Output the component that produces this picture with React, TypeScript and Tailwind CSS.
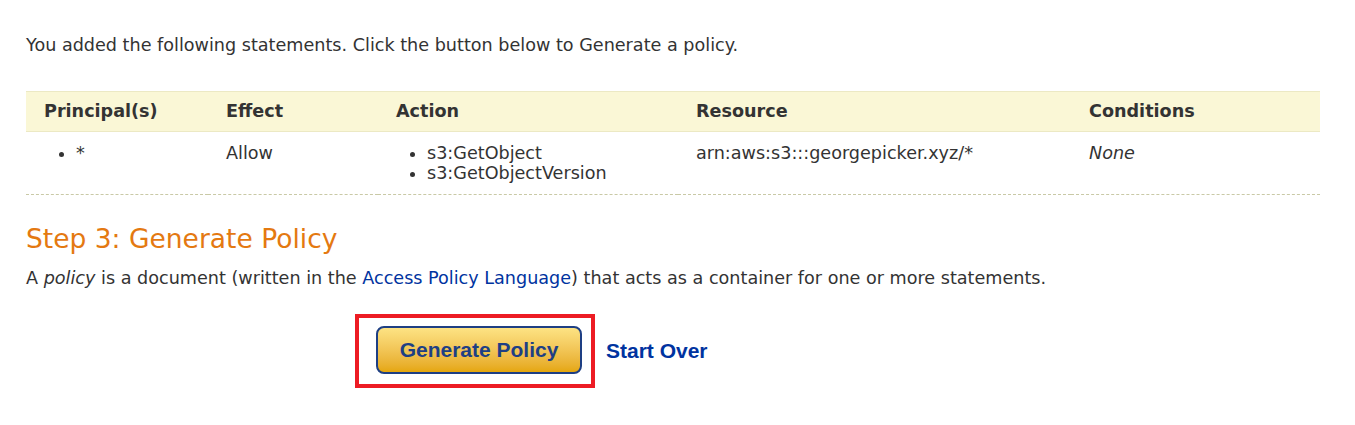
export default function App() {
  const font = { fontFamily: '"DejaVu Sans", Verdana, sans-serif' };
  const arial = { fontFamily: '"Liberation Sans", Arial, sans-serif' };
  const cell = 'pl-[18px] pt-[11px] pb-[11px]';
  return (
    <div className="bg-white text-[#333] px-[26px] pt-[33px] h-[425px]" style={font}>
      <p className="text-[17.6px] leading-[24px]">
        You added the following statements. Click the button below to Generate a policy.
      </p>

      <table className="w-[1294px] mt-[34px] border-collapse text-[17.6px]">
        <colgroup>
          <col className="w-[182px]" />
          <col className="w-[170px]" />
          <col className="w-[300px]" />
          <col className="w-[393px]" />
          <col className="w-[249px]" />
        </colgroup>
        <thead>
          <tr className="bg-[#faf7d6] border-t border-b border-[#ece9c4] h-[40px]">
            <th className="text-left font-bold pl-[18px]">Principal(s)</th>
            <th className="text-left font-bold pl-[18px]">Effect</th>
            <th className="text-left font-bold pl-[18px]">Action</th>
            <th className="text-left font-bold pl-[18px]">Resource</th>
            <th className="text-left font-bold pl-[18px]">Conditions</th>
          </tr>
        </thead>
        <tbody>
          <tr className="border-b border-dashed border-[#c9c9a6] align-top leading-[20px]">
            <td className={cell}>
              <ul className="list-disc pl-[32px]"><li>*</li></ul>
            </td>
            <td className={cell}>Allow</td>
            <td className={cell}>
              <ul className="list-disc pl-[31px]">
                <li>s3:GetObject</li>
                <li>s3:GetObjectVersion</li>
              </ul>
            </td>
            <td className={cell}>arn:aws:s3:::georgepicker.xyz/*</td>
            <td className={`${cell} italic`}>None</td>
          </tr>
        </tbody>
      </table>

      <h2 className="text-[#e47911] text-[26.5px] leading-[30px] mt-[29px]">Step 3: Generate Policy</h2>
      <p className="text-[17.6px] leading-[24px] mt-[12px]">
        A <em>policy</em> is a document (written in the{' '}
        <a href="#" className="text-[#0033a0]">Access Policy Language</a>) that acts as a container for one or more statements.
      </p>

      <div className="flex items-center mt-[24px] ml-[329px]">
        <div className="border-4 border-[#ed1c24] pl-[17px] pr-[9px] pt-[8px] pb-[10px]">
          <button
            className="w-[206px] h-[48px] rounded-[8px] border-2 border-[#1e3f84] bg-gradient-to-b from-[#fde383] to-[#e5a709] text-[#1e3f84] text-[21px] font-bold"
            style={arial}
          >
            Generate Policy
          </button>
        </div>
        <a href="#" className="ml-[11px] text-[#0033a0] text-[21px] font-bold" style={arial}>
          Start Over
        </a>
      </div>
    </div>
  );
}
